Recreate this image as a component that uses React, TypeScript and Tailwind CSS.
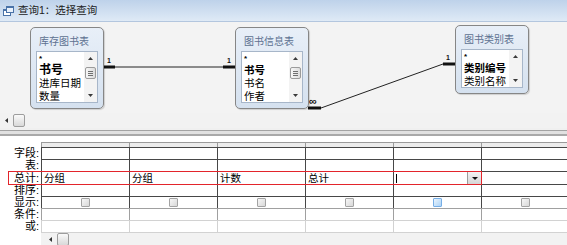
import React from 'react';

const COLS = [0, 1, 2, 3, 4, 5];

function UpArrow() {
  return (
    <svg width="5" height="3" viewBox="0 0 5 3">
      <path d="M0 3L2.5 0L5 3Z" fill="#3a3a3a" />
    </svg>
  );
}

function DownArrow() {
  return (
    <svg width="5" height="3" viewBox="0 0 5 3">
      <path d="M0 0L2.5 3L5 0Z" fill="#3a3a3a" />
    </svg>
  );
}

function ListScroll({ thumb }: { thumb: boolean }) {
  return (
    <div className="flex w-[13px] shrink-0 flex-col items-center bg-[#f3f3f3]">
      <div className="flex h-[13px] items-center justify-center">
        <UpArrow />
      </div>
      {thumb && (
        <div className="mt-[2px] flex h-[12px] w-[11px] flex-col items-center justify-center gap-[1px] rounded-[2px] border border-[#9b9b9b] bg-gradient-to-r from-[#f7f7f7] to-[#dcdcdc]">
          <div className="h-px w-[5px] bg-[#6f6f6f]" />
          <div className="h-px w-[5px] bg-[#6f6f6f]" />
          <div className="h-px w-[5px] bg-[#6f6f6f]" />
        </div>
      )}
      <div className="flex-1" />
      <div className="flex h-[13px] items-center justify-center">
        <DownArrow />
      </div>
    </div>
  );
}

type Item = { text: string; bold?: boolean; big?: boolean };

function TableBox({
  className,
  listClass,
  title,
  items,
  thumb,
}: {
  className: string;
  listClass: string;
  title: string;
  items: Item[];
  thumb: boolean;
}) {
  return (
    <div
      className={`absolute flex w-[74px] flex-col rounded-[5px] border border-[#868686] bg-gradient-to-b from-[#e8eff8] to-[#d5e1ef] px-[5px] shadow-[1px_1px_1px_rgba(0,0,0,0.15)] ${className}`}
    >
      <div className="flex h-[23px] items-center pl-[3px] pt-[3px] text-[10px] text-[#5d7191]">{title}</div>
      <div className={`flex overflow-hidden border border-[#a7b6c9] bg-white ${listClass}`}>
        <div className="flex-1 overflow-hidden pl-[2px] pt-[1px] text-[10.5px] text-black">
          <div className="h-[11px] text-[8px] font-bold leading-[11px]">*</div>
          {items.map(it => (
            <div
              key={it.text}
              className={`whitespace-nowrap leading-[13px] ${it.bold ? 'font-bold' : ''} ${it.big ? 'text-[12px]' : ''}`}
            >
              {it.text}
            </div>
          ))}
        </div>
        <ListScroll thumb={thumb} />
      </div>
    </div>
  );
}

function HScroll({ className }: { className: string }) {
  return (
    <div className={`flex items-center bg-[#f2f2f2] ${className}`}>
      <svg width="3" height="5" viewBox="0 0 3 5" className="shrink-0">
        <path d="M3 0L0 2.5L3 5Z" fill="#333" />
      </svg>
      <div className="ml-[5px] h-[13px] w-[12px] rounded-[2px] border border-[#9d9d9d] bg-gradient-to-b from-[#fafafa] to-[#d9d9d9]" />
    </div>
  );
}

function GridRow({
  className,
  line,
  render,
}: {
  className: string;
  line: string;
  render?: (i: number) => React.ReactNode;
}) {
  return (
    <div className={`flex shrink-0 border-t ${line} ${className}`}>
      {COLS.map(i => (
        <div key={i} className={`relative flex w-[88px] shrink-0 items-center border-l ${line}`}>
          {render?.(i)}
        </div>
      ))}
    </div>
  );
}

const totals = ['分组', '分组', '计数', '总计'];

export default function App() {
  return (
    <div className="h-[245px] w-[567px] overflow-hidden bg-white font-['Liberation_Sans','Noto_Sans_CJK_SC',sans-serif] text-black">
      {/* title bar */}
      <div className="flex h-[22px] items-center gap-[4px] border-b border-[#b3c6de] bg-gradient-to-b from-[#bed2ea] to-[#dfeaf6] pl-[3px]">
        <svg width="11" height="10" viewBox="0 0 11 10">
          <rect x="0.5" y="3.5" width="7" height="6" fill="#fff" stroke="#4a73a8" />
          <rect x="0.5" y="3.5" width="7" height="1.5" fill="#4a73a8" />
          <rect x="3.5" y="0.5" width="7" height="6" fill="#e9f1fb" stroke="#4a73a8" />
          <rect x="3.5" y="0.5" width="7" height="1.5" fill="#4a73a8" />
        </svg>
        <span className="text-[10.5px] text-[#1b1b1b]">查询1：选择查询</span>
      </div>

      {/* upper pane: table diagram */}
      <div className="relative h-[91px] bg-[#f3f3f3]">
        <svg className="absolute inset-0" width="567" height="91" viewBox="0 0 567 91">
          <line x1="103" y1="45" x2="235" y2="45" stroke="#222" strokeWidth="1" />
          <line x1="103" y1="45" x2="115" y2="45" stroke="#111" strokeWidth="3" />
          <line x1="223" y1="45" x2="235" y2="45" stroke="#111" strokeWidth="3" />
          <text x="107" y="41" fontSize="7" fontWeight="bold" fill="#111">1</text>
          <text x="227" y="41" fontSize="7" fontWeight="bold" fill="#111">1</text>
          <line x1="308" y1="86" x2="321" y2="86" stroke="#111" strokeWidth="3" />
          <line x1="321" y1="86" x2="443" y2="42" stroke="#222" strokeWidth="1" />
          <line x1="443" y1="42" x2="455" y2="42" stroke="#111" strokeWidth="3" />
          <text x="309" y="83" fontSize="11" fontWeight="bold" fill="#111">∞</text>
          <text x="446" y="38" fontSize="7" fontWeight="bold" fill="#111">1</text>
        </svg>
        <TableBox
          className="left-[30px] top-[5px] h-[82px]"
          listClass="h-[52px]"
          title="库存图书表"
          thumb
          items={[{ text: '书号', bold: true, big: true }, { text: '进库日期' }, { text: '数量' }]}
        />
        <TableBox
          className="left-[235px] top-[5px] h-[82px]"
          listClass="h-[52px]"
          title="图书信息表"
          thumb
          items={[{ text: '书号', bold: true }, { text: '书名' }, { text: '作者' }]}
        />
        <TableBox
          className="left-[455px] top-[3px] h-[69px]"
          listClass="h-[39px]"
          title="图书类别表"
          thumb={false}
          items={[{ text: '类别编号', bold: true }, { text: '类别名称' }]}
        />
      </div>
      <HScroll className="h-[15px] pl-[5px]" />

      {/* splitter */}
      <div className="h-[2px] bg-[#f0f0f0]" />
      <div className="h-px bg-[#a3a3a3]" />
      <div className="h-[3px] bg-[#e1e1e1]" />
      <div className="h-[2px] bg-[#a9a9a9]" />

      {/* lower pane: design grid */}
      <div className="relative flex h-[109px]">
        <div className="flex w-[41px] shrink-0 flex-col pr-[2px] text-right text-[11px] leading-[12px]">
          <div className="h-[11px] shrink-0" />
          <div className="flex h-[12px] shrink-0 items-end justify-end">字段:</div>
          <div className="flex h-[12px] shrink-0 items-end justify-end">表:</div>
          <div className="flex h-[13px] shrink-0 items-end justify-end">总计:</div>
          <div className="flex h-[12px] shrink-0 items-end justify-end">排序:</div>
          <div className="flex h-[12px] shrink-0 items-end justify-end">显示:</div>
          <div className="flex h-[12px] shrink-0 items-end justify-end">条件:</div>
          <div className="flex h-[12px] shrink-0 items-end justify-end">或:</div>
        </div>
        <div className="flex flex-1 flex-col overflow-hidden">
          <div className="h-[6px] shrink-0" />
          <GridRow className="h-[5px] bg-[#ececec]" line="border-[#9a9a9a]" />
          <GridRow className="h-[12px]" line="border-[#474747]" />
          <GridRow className="h-[12px]" line="border-[#474747]" />
          <GridRow
            className="h-[13px] text-[10.5px]"
            line="border-[#474747]"
            render={i =>
              i < 4 ? (
                <span className="pl-[2px] leading-[11px]">{totals[i]}</span>
              ) : i === 4 ? (
                <>
                  <div className="ml-[2px] h-[9px] w-px bg-black" />
                  <div className="absolute right-0 top-0 flex h-[12px] w-[14px] items-center justify-center border-l border-[#9c9c9c] bg-gradient-to-b from-[#f4f4f4] to-[#d6d6d6]">
                    <svg width="6" height="3" viewBox="0 0 6 3">
                      <path d="M0 0L3 3L6 0Z" fill="#111" />
                    </svg>
                  </div>
                </>
              ) : null
            }
          />
          <GridRow className="h-[12px]" line="border-[#474747]" />
          <GridRow
            className="h-[12px]"
            line="border-[#474747]"
            render={i => (
              <div className="flex w-full justify-center">
                {i === 4 ? (
                  <div className="h-[9px] w-[9px] rounded-[1px] border border-[#76aee6] bg-gradient-to-br from-[#eaf4fd] to-[#acd3f6]" />
                ) : (
                  <div className="h-[9px] w-[9px] rounded-[1px] border border-[#a3a3a3] bg-gradient-to-br from-[#f7f7f7] to-[#d8d8d8]" />
                )}
              </div>
            )}
          />
          <GridRow className="h-[12px]" line="border-[#a0a0a0]" />
          <GridRow className="h-[12px]" line="border-[#d2d2d2]" />
          <div className="border-t border-[#d2d2d2]">
            <HScroll className="h-[13px] pl-[8px]" />
          </div>
        </div>
        <div className="absolute left-[8px] top-[35px] h-[14px] w-[474px] border-[1.5px] border-[#e3242b]" />
      </div>
    </div>
  );
}
